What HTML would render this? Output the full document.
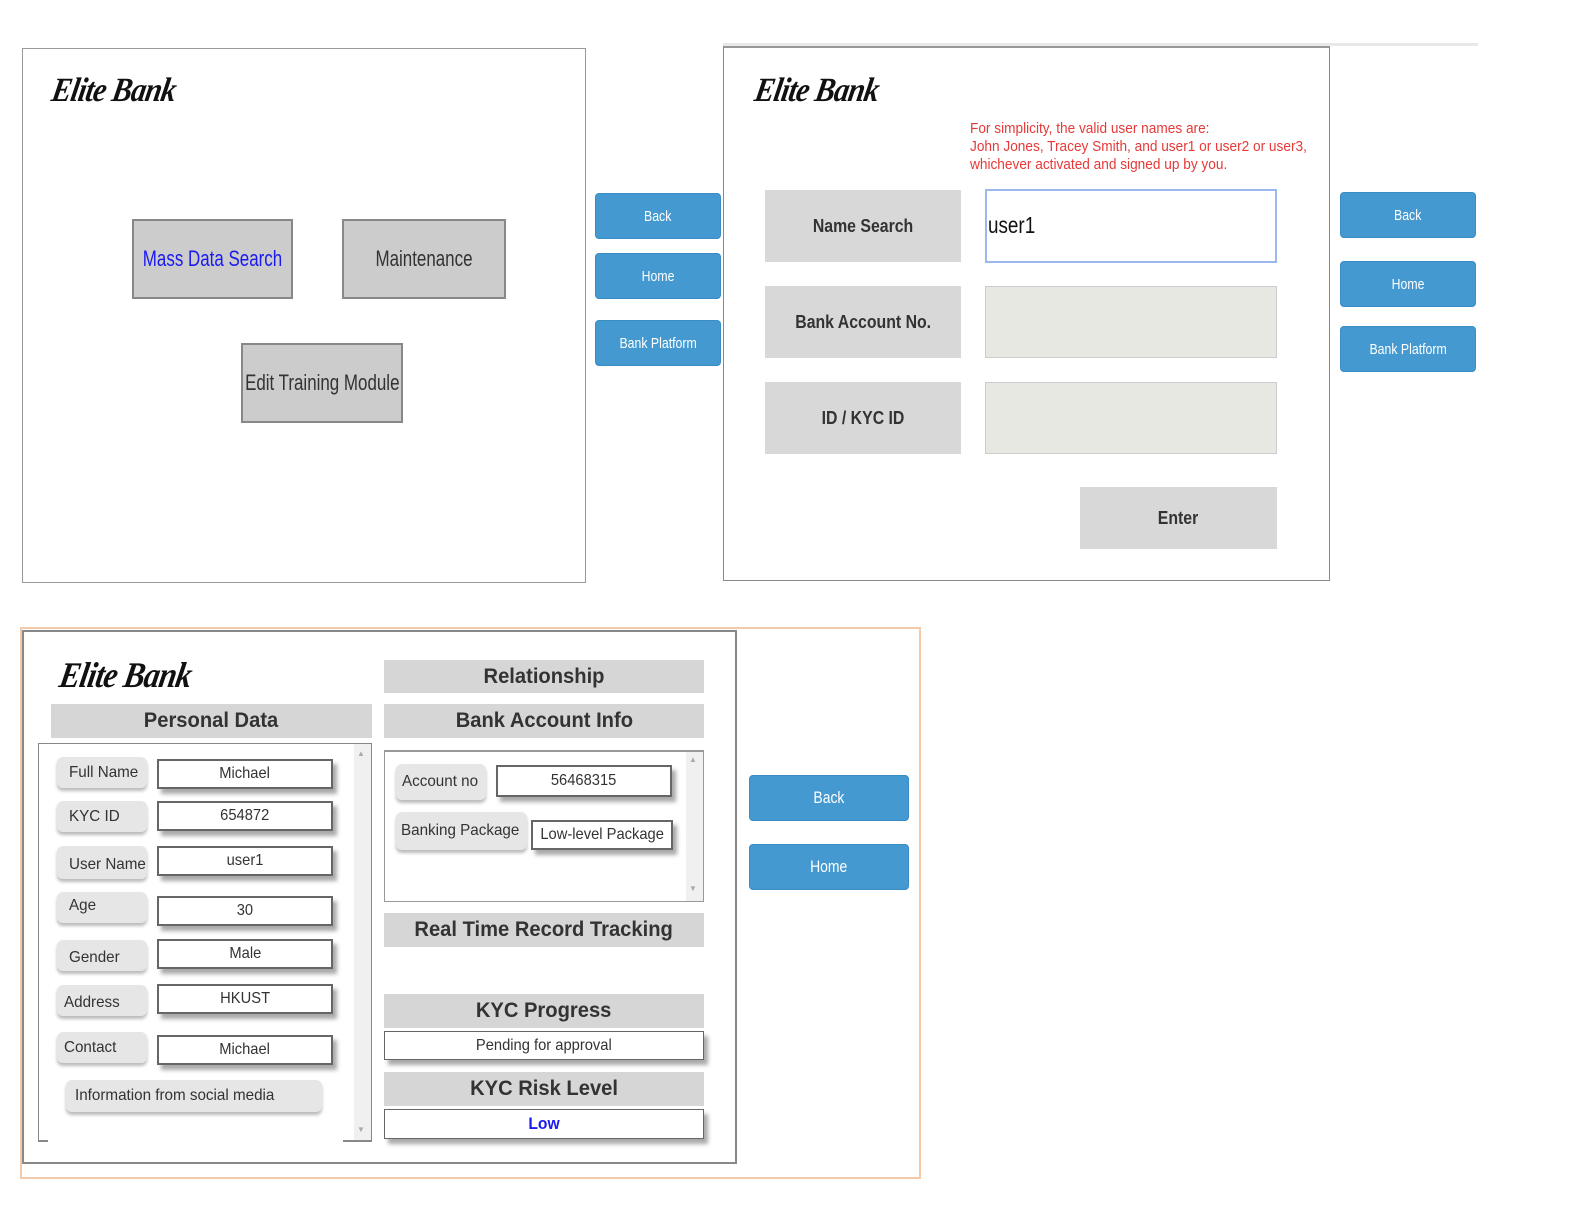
<!DOCTYPE html>
<html><head><meta charset="utf-8"><style>
*{box-sizing:border-box;margin:0;padding:0}
body{width:1572px;height:1208px;background:#fff;position:relative;overflow:hidden;font-family:"Liberation Sans",sans-serif;color:#333;white-space:nowrap}
.a{position:absolute}
.c{display:flex;align-items:center;justify-content:center;text-align:center}
.n{display:inline-block;transform:scaleX(.82)}
.pl .n{transform-origin:left;transform:scaleX(.95)}
.hd .n{transform:scaleX(.96)}
.fd .n{transform:scaleX(.92)}
.lbl .n{transform:scaleX(.88)}
.gb .n{transform:scaleX(.77)}
.logo{font-family:"Liberation Serif",serif;font-style:italic;font-weight:bold;color:#111;transform:skewX(-10deg) scaleX(.88);transform-origin:left;letter-spacing:-1px}
.gb{background:#ccc;border:2px solid #888;font-size:22px;color:#333}
.bb{background:#4499d0;color:#fff;border-radius:4px;font-size:15px;border:1px solid #3a8cc4}
.lbl{background:#d8d8d8;font-weight:bold;font-size:18px;color:#333}
.hd{background:#d6d6d6;font-weight:bold;font-size:21px;color:#333}
.pl{background:#e6e6e6;border-radius:6px;box-shadow:0 3px 3px #bbb;font-size:16px;color:#333;padding-left:12px;display:flex;align-items:center}
.fd{background:#fff;border:2px solid #666;box-shadow:4px 5px 4px #aaa;font-size:16px;color:#333}
</style></head><body>

<div class="a" style="left:22px;top:48px;width:564px;height:535px;border:1px solid #999"></div>
<div class="a logo" style="left:52px;top:72px;font-size:34px">Elite Bank</div>
<div class="a c gb" style="left:132px;top:219px;width:161px;height:80px;color:#1a1af0"><span class="n">Mass Data Search</span></div>
<div class="a c gb" style="left:342px;top:219px;width:164px;height:80px"><span class="n">Maintenance</span></div>
<div class="a c gb" style="left:241px;top:343px;width:162px;height:80px"><span class="n">Edit Training Module</span></div>
<div class="a c bb" style="left:595px;top:193px;width:126px;height:46px"><span class="n">Back</span></div>
<div class="a c bb" style="left:595px;top:253px;width:126px;height:46px"><span class="n">Home</span></div>
<div class="a c bb" style="left:595px;top:320px;width:126px;height:46px"><span class="n">Bank Platform</span></div>

<div class="a" style="left:723px;top:43px;width:755px;height:3px;background:#e8e8e8"></div>
<div class="a" style="left:723px;top:46px;width:607px;height:535px;border:1px solid #888;border-top:2px solid #999"></div>
<div class="a logo" style="left:755px;top:72px;font-size:34px">Elite Bank</div>
<div class="a" style="left:970px;top:120px;font-size:15px;line-height:18px;color:#e83838;transform:scaleX(.91);transform-origin:left">For simplicity, the valid user names are:<br>John Jones, Tracey Smith, and user1 or user2 or user3,<br>whichever activated and signed up by you.</div>
<div class="a c lbl" style="left:765px;top:190px;width:196px;height:72px"><span class="n">Name Search</span></div>
<div class="a c lbl" style="left:765px;top:286px;width:196px;height:72px"><span class="n">Bank Account No.</span></div>
<div class="a c lbl" style="left:765px;top:382px;width:196px;height:72px"><span class="n">ID / KYC ID</span></div>
<div class="a" style="left:985px;top:189px;width:292px;height:74px;border:2px solid #9ab8ee;background:#fff;font-size:23px;color:#111;padding:21px 0 0 1px"><span class="n" style="transform-origin:left">user1</span></div>
<div class="a" style="left:985px;top:286px;width:292px;height:72px;border:1px solid #ccc;background:#e8e8e3"></div>
<div class="a" style="left:985px;top:382px;width:292px;height:72px;border:1px solid #ccc;background:#e8e8e3"></div>
<div class="a c lbl" style="left:1080px;top:487px;width:197px;height:62px"><span class="n">Enter</span></div>
<div class="a c bb" style="left:1340px;top:192px;width:136px;height:46px"><span class="n">Back</span></div>
<div class="a c bb" style="left:1340px;top:261px;width:136px;height:46px"><span class="n">Home</span></div>
<div class="a c bb" style="left:1340px;top:326px;width:136px;height:46px"><span class="n">Bank Platform</span></div>

<div class="a" style="left:20px;top:627px;width:901px;height:552px;border:2px solid #f2c9a9"></div>
<div class="a" style="left:22px;top:630px;width:715px;height:534px;border:2px solid #888"></div>
<div class="a logo" style="left:60px;top:654px;font-size:36px">Elite Bank</div>
<div class="a c hd" style="left:51px;top:704px;width:321px;height:34px"><span class="n">Personal Data</span></div>
<div class="a c hd" style="left:384px;top:660px;width:320px;height:33px"><span class="n">Relationship</span></div>
<div class="a c hd" style="left:384px;top:704px;width:320px;height:34px"><span class="n">Bank Account Info</span></div>

<div class="a" style="left:38px;top:743px;width:334px;height:399px;border:1px solid #888;border-bottom:none;background:#fff"></div>
<div class="a" style="left:354px;top:744px;width:17px;height:397px;background:#f0f0f0"></div>
<div class="a" style="left:357px;top:749px;font-size:8px;color:#aaa">▲</div>
<div class="a" style="left:357px;top:1125px;font-size:8px;color:#aaa">▼</div>
<div class="a" style="left:38px;top:1140px;width:10px;height:2px;background:#888"></div>
<div class="a" style="left:343px;top:1140px;width:28px;height:2px;background:#888"></div>

<div class="a pl" style="left:57px;top:757px;width:90px;height:31px"><span class="n">Full Name</span></div>
<div class="a pl" style="left:57px;top:801px;width:90px;height:31px"><span class="n">KYC ID</span></div>
<div class="a pl" style="left:57px;top:846px;width:90px;height:33px;padding-top:4px"><span class="n">User Name</span></div>
<div class="a pl" style="left:57px;top:892px;width:90px;height:31px;align-items:flex-start;padding-top:5px"><span class="n">Age</span></div>
<div class="a pl" style="left:57px;top:940px;width:90px;height:31px;padding-top:4px"><span class="n">Gender</span></div>
<div class="a pl" style="left:57px;top:985px;width:90px;height:31px;padding-left:7px;padding-top:4px"><span class="n">Address</span></div>
<div class="a pl" style="left:57px;top:1032px;width:90px;height:31px;padding-left:7px"><span class="n">Contact</span></div>
<div class="a pl" style="left:66px;top:1080px;width:256px;height:32px;padding-left:9px"><span class="n">Information from social media</span></div>

<div class="a c fd" style="left:157px;top:759px;width:176px;height:30px"><span class="n">Michael</span></div>
<div class="a c fd" style="left:157px;top:801px;width:176px;height:30px"><span class="n">654872</span></div>
<div class="a c fd" style="left:157px;top:846px;width:176px;height:30px"><span class="n">user1</span></div>
<div class="a c fd" style="left:157px;top:896px;width:176px;height:30px"><span class="n">30</span></div>
<div class="a c fd" style="left:157px;top:939px;width:176px;height:30px"><span class="n">Male</span></div>
<div class="a c fd" style="left:157px;top:984px;width:176px;height:30px"><span class="n">HKUST</span></div>
<div class="a c fd" style="left:157px;top:1035px;width:176px;height:30px"><span class="n">Michael</span></div>

<div class="a" style="left:384px;top:750px;width:320px;height:152px;border:1px solid #999;border-top-width:2px;background:#fff"></div>
<div class="a" style="left:686px;top:752px;width:17px;height:149px;background:#f0f0f0"></div>
<div class="a" style="left:689px;top:755px;font-size:8px;color:#aaa">▲</div>
<div class="a" style="left:689px;top:884px;font-size:8px;color:#aaa">▼</div>
<div class="a pl" style="left:396px;top:764px;width:90px;height:36px;padding-left:6px"><span class="n">Account no</span></div>
<div class="a pl" style="left:396px;top:812px;width:131px;height:38px;padding-left:5px;align-items:flex-start;padding-top:10px"><span class="n">Banking Package</span></div>
<div class="a c fd" style="left:496px;top:765px;width:176px;height:32px"><span class="n">56468315</span></div>
<div class="a c fd" style="left:531px;top:820px;width:142px;height:30px"><span class="n">Low-level Package</span></div>

<div class="a c hd" style="left:384px;top:913px;width:320px;height:34px"><span class="n">Real Time Record Tracking</span></div>
<div class="a c hd" style="left:384px;top:994px;width:320px;height:34px"><span class="n">KYC Progress</span></div>
<div class="a c fd" style="left:384px;top:1031px;width:320px;height:29px;border-width:1px"><span class="n">Pending for approval</span></div>
<div class="a c hd" style="left:384px;top:1072px;width:320px;height:34px"><span class="n">KYC Risk Level</span></div>
<div class="a c fd" style="left:384px;top:1109px;width:320px;height:30px;border-width:1px;color:#1a1af0;font-weight:bold;font-size:17px"><span class="n">Low</span></div>

<div class="a c bb" style="left:749px;top:775px;width:160px;height:46px;font-size:17px"><span class="n">Back</span></div>
<div class="a c bb" style="left:749px;top:844px;width:160px;height:46px;font-size:17px"><span class="n">Home</span></div>
</body></html>
